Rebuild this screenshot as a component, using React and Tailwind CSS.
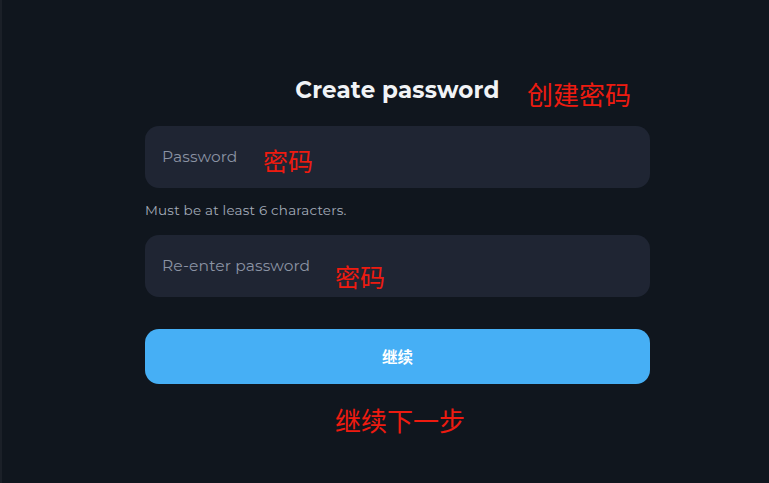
export default function App() {
  const cjk = { fontFamily: '"Noto Sans CJK SC", "Noto Sans", sans-serif' };
  return (
    <div
      className="relative w-[769px] h-[483px] bg-[#10161e] border-l-2 border-[#1b2028] overflow-hidden"
      style={{ fontFamily: 'Montserrat, Inter, "Noto Sans", sans-serif' }}
    >
      <div className="w-[505px] ml-[143px] pt-[75px] flex flex-col">
        <h1 className="text-center text-[23px] leading-[31px] font-bold text-[#f1f3f6] tracking-[0.2px]">
          Create password
        </h1>
        <div className="mt-[20px] h-[62px] rounded-[14px] bg-[#1f2533] flex items-center px-[17px]">
          <span className="text-[15.5px] tracking-[0.1px] text-[#8b93a3]">Password</span>
        </div>
        <p className="mt-[13px] text-[13.5px] leading-[18px] tracking-[0.2px] text-[#a3abb9]">Must be at least 6 characters.</p>
        <div className="mt-[16px] h-[62px] rounded-[14px] bg-[#1f2533] flex items-center px-[17px]">
          <span className="text-[15.5px] tracking-[0.1px] text-[#8b93a3]">Re-enter password</span>
        </div>
        <button className="mt-[32px] h-[55px] rounded-[14px] bg-[#46aff5] text-white text-[15.5px] font-bold" style={cjk}>
          继续
        </button>
      </div>

      <span className="absolute left-[525px] top-[77px] text-[26px] leading-[34px] text-[#ee1b10]" style={cjk}>创建密码</span>
      <span className="absolute left-[261px] top-[143px] text-[25px] leading-[34px] text-[#ee1b10]" style={cjk}>密码</span>
      <span className="absolute left-[333px] top-[259px] text-[25px] leading-[34px] text-[#ee1b10]" style={cjk}>密码</span>
      <span className="absolute left-[333px] top-[403px] text-[26px] leading-[34px] text-[#ee1b10]" style={cjk}>继续下一步</span>
    </div>
  );
}
